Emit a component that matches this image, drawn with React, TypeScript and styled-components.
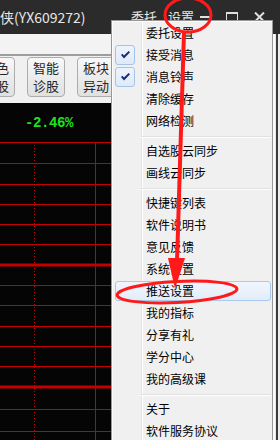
import React from 'react';
import styled, { createGlobalStyle } from 'styled-components';

const GlobalStyle = createGlobalStyle`
  html, body {
    margin: 0;
    padding: 0;
    background: #2b2b2b;
  }
  body {
    font-family: "Noto Sans CJK SC", "Noto Sans", sans-serif;
  }
`;

const Screen = styled.div`
  position: relative;
  width: 280px;
  height: 440px;
  overflow: hidden;
  display: flex;
  flex-direction: column;
  background: #f0f0f0;
`;

const TitleBar = styled.div`
  flex: none;
  height: 34px;
  display: flex;
  align-items: center;
  background: #2b2b2b;
  color: #e6e6e6;
`;

const Title = styled.div`
  flex: 1;
  font-size: 14px;
  line-height: 18px;
  white-space: nowrap;
`;

const TitleLink = styled.span<{ $gap: number }>`
  font-size: 13px;
  line-height: 16px;
  margin-right: ${(p) => p.$gap}px;
  margin-top: -1px;
`;

const WinButton = styled.div<{ $gap: number }>`
  width: 12px;
  height: 12px;
  margin-right: ${(p) => p.$gap}px;
  display: flex;
  align-items: center;
  justify-content: center;
  color: #e0e0e0;
`;

const MinBar = styled.div`
  width: 11px;
  height: 2px;
  background: #e0e0e0;
`;

const MaxBox = styled.div`
  width: 12px;
  height: 11px;
  box-sizing: border-box;
  border: 1px solid #e0e0e0;
  border-top-width: 2px;
`;

const Body = styled.div`
  flex: 1;
  display: flex;
  min-height: 0;
`;

const Main = styled.div`
  flex: 1;
  display: flex;
  flex-direction: column;
  min-width: 0;
`;

const EdgeStrip = styled.div`
  flex: none;
  width: 7px;
  background: linear-gradient(
    to right,
    #fafafa 0 2px,
    #e8e8e8 2px 3px,
    #3a3a3a 3px 5px,
    #ececec 5px
  );
`;

const TopStrip = styled.div`
  flex: none;
  height: 20px;
  background: #f3f3f3;
  border-bottom: 2px solid #9d9d9d;
`;

const ButtonBar = styled.div`
  flex: none;
  height: 47px;
  box-sizing: border-box;
  padding-top: 1px;
  display: flex;
  align-items: flex-start;
  gap: 12px;
  background: #f0f0f0;
  overflow: hidden;
`;

const ToolButton = styled.div<{ $shift?: number }>`
  flex: none;
  width: 38px;
  height: 40px;
  box-sizing: border-box;
  margin-left: ${(p) => p.$shift ?? 0}px;
  border: 1px solid #acacac;
  border-radius: 4px;
  background: linear-gradient(#f8f8f8, #e0e0e0);
  display: flex;
  flex-direction: column;
  align-items: center;
  justify-content: center;
  font-size: 13px;
  line-height: 18px;
  color: #262626;
`;

const Chart = styled.div`
  flex: 1;
  display: flex;
  flex-direction: column;
  background: #050505;
  min-height: 0;
`;

const ChartHead = styled.div`
  flex: none;
  height: 39px;
  display: flex;
  align-items: center;
  padding-left: 25px;
`;

const Change = styled.span`
  font-family: "Liberation Mono", "DejaVu Sans Mono", monospace;
  font-size: 14px;
  font-weight: bold;
  color: #1fe21f;
  letter-spacing: -0.4px;
`;

const Grid = styled.svg`
  flex: none;
  display: block;
`;

const Menu = styled.div`
  position: absolute;
  left: 111px;
  top: 20px;
  width: 162px;
  height: 440px;
  box-sizing: border-box;
  border: 1px solid #979797;
  padding-top: 1px;
  background: linear-gradient(
    to right,
    #f0f0f0 0 29px,
    #e2e3e3 29px 30px,
    #ffffff 30px 31px,
    #f0f0f0 31px
  );
  box-shadow: inset 1px 1px 0 #fbfbfb;
`;

const Item = styled.div<{ $active?: boolean }>`
  position: relative;
  height: 22px;
  display: flex;
  align-items: center;
  font-size: 12px;
  color: #000;

  &::before {
    content: '';
    display: ${(p) => (p.$active ? 'block' : 'none')};
    position: absolute;
    left: 3px;
    right: 1px;
    top: 1px;
    bottom: 1px;
    border: 1px solid #a9c9ef;
    border-radius: 3px;
    background: linear-gradient(#f1f6fd, #e2ecf9);
  }
`;

const IconCell = styled.div`
  position: relative;
  width: 30px;
  height: 22px;
  flex: none;
  display: flex;
  align-items: center;
`;

const Check = styled.div`
  width: 20px;
  height: 20px;
  margin-left: 3px;
  box-sizing: border-box;
  border: 1px solid #a3c3ea;
  border-radius: 3px;
  background: linear-gradient(#eef4fc, #dfe9f7);
  display: flex;
  align-items: center;
  justify-content: center;
`;

const Label = styled.span`
  position: relative;
  padding-left: 4px;
  line-height: 22px;
  white-space: nowrap;
`;

const Separator = styled.div`
  height: 8px;
  position: relative;

  &::after {
    content: '';
    position: absolute;
    left: 29px;
    right: 1px;
    top: 4px;
    height: 1px;
    background: #e0e0e0;
    border-bottom: 1px solid #ffffff;
  }
`;

const Marks = styled.svg`
  position: absolute;
  left: 0;
  top: 0;
  pointer-events: none;
`;

type Entry = { label?: string; checked?: boolean; active?: boolean };

const entries: Entry[] = [
  { label: '委托设置' },
  { label: '接受消息', checked: true },
  { label: '消息铃声', checked: true },
  { label: '清除缓存' },
  { label: '网络检测' },
  {},
  { label: '自选股云同步' },
  { label: '画线云同步' },
  {},
  { label: '快捷键列表' },
  { label: '软件说明书' },
  { label: '意见反馈' },
  { label: '系统设置' },
  { label: '推送设置', active: true },
  { label: '我的指标' },
  { label: '分享有礼' },
  { label: '学分中心' },
  { label: '我的高级课' },
  {},
  { label: '关于' },
  { label: '软件服务协议' },
];

const thinRows = [0.5, 21.5, 42.5, 62.5, 82.5, 102.5, 143.5, 163.5, 184.5, 204.5, 224.5, 267.5, 289.5];
const thickRows = [123, 245];

const CheckGlyph = () => (
  <svg width="9" height="8" viewBox="0 0 9 8">
    <polygon points="0,4 1.4,2.8 3,4.6 7.6,0 9,1.3 3,7.4" fill="#1b2a78" />
  </svg>
);

const CloseGlyph = () => (
  <svg width="11" height="10" viewBox="0 0 11 10">
    <path d="M1 0.5 L10 9.5 M10 0.5 L1 9.5" stroke="#e0e0e0" strokeWidth="2" />
  </svg>
);

export default function App() {
  return (
    <Screen>
      <GlobalStyle />
      <TitleBar>
        <Title>侠(YX609272)</Title>
        <TitleLink $gap={11}>委托</TitleLink>
        <TitleLink $gap={5}>设置</TitleLink>
        <WinButton $gap={15}>
          <MinBar />
        </WinButton>
        <WinButton $gap={15}>
          <MaxBox />
        </WinButton>
        <WinButton $gap={15}>
          <CloseGlyph />
        </WinButton>
      </TitleBar>

      <Body>
        <Main>
          <TopStrip />
          <ButtonBar>
            <ToolButton $shift={-23}>
              <span>特色</span>
              <span>选股</span>
            </ToolButton>
            <ToolButton>
              <span>智能</span>
              <span>诊股</span>
            </ToolButton>
            <ToolButton>
              <span>板块</span>
              <span>异动</span>
            </ToolButton>
          </ButtonBar>
          <Chart>
            <ChartHead>
              <Change>-2.46%</Change>
            </ChartHead>
            <Grid width="273" height="300" viewBox="0 0 273 300">
              {thinRows.map((y) => (
                <line key={y} x1="0" x2="273" y1={y} y2={y} stroke="#c40000" strokeWidth="1" />
              ))}
              {thickRows.map((y) => (
                <line key={y} x1="0" x2="273" y1={y} y2={y} stroke="#c40000" strokeWidth="3" />
              ))}
              <line x1="95.5" x2="95.5" y1="0" y2="300" stroke="#c40000" strokeWidth="1" />
              <line x1="34.5" x2="34.5" y1="3" y2="300" stroke="#d00000" strokeWidth="1" strokeDasharray="1 2" />
            </Grid>
          </Chart>
        </Main>
        <EdgeStrip />
      </Body>

      <Menu>
        {entries.map((e, i) =>
          e.label ? (
            <Item key={i} $active={e.active}>
              <IconCell>
                {e.checked && (
                  <Check>
                    <CheckGlyph />
                  </Check>
                )}
              </IconCell>
              <Label>{e.label}</Label>
            </Item>
          ) : (
            <Separator key={i} />
          )
        )}
      </Menu>

      {/* red hand-drawn annotations on top of the screenshot */}
      <Marks width="280" height="440" viewBox="0 0 280 440">
        <ellipse cx="188" cy="15" rx="23" ry="17" fill="none" stroke="#ff1a1a" strokeWidth="3" />
        <line x1="184" y1="32" x2="177" y2="262" stroke="#ff1a1a" strokeWidth="4" />
        <polygon points="168,258 185,258 175,289" fill="#ff1a1a" />
        <ellipse
          cx="177"
          cy="292"
          rx="60"
          ry="10.5"
          fill="none"
          stroke="#ff1a1a"
          strokeWidth="3"
          transform="rotate(-3 177 292)"
        />
      </Marks>
    </Screen>
  );
}
